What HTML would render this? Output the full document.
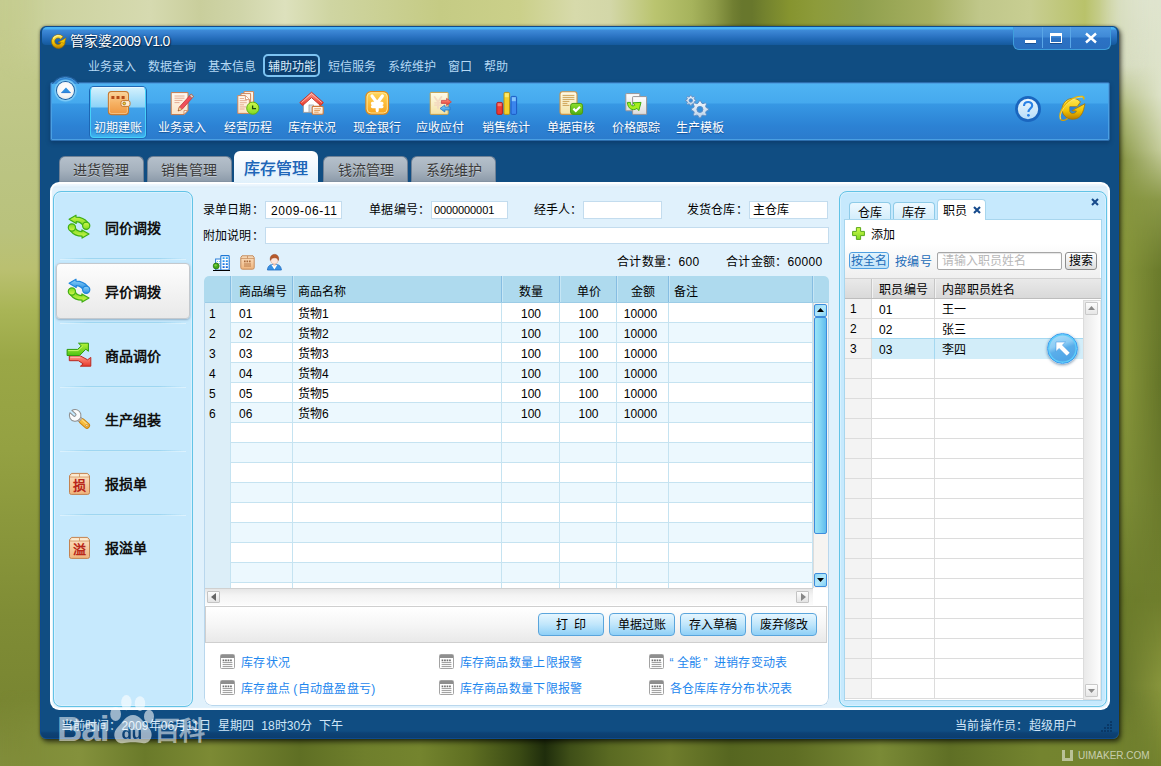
<!DOCTYPE html>
<html lang="zh-CN">
<head>
<meta charset="utf-8">
<title>管家婆2009 V1.0</title>
<style>
*{box-sizing:border-box;margin:0;padding:0}
html,body{width:1161px;height:766px;overflow:hidden}
body{font-family:"Liberation Sans",sans-serif;font-size:12px;color:#000;position:relative;background:#7d8c3a}
.abs{position:absolute}
i{display:block;font-style:normal}
svg{display:block;overflow:visible}
#bg{position:absolute;left:0;top:0;width:1161px;height:766px;overflow:hidden;background:#8a9845}
#bg div{position:absolute}
#win{position:absolute;left:40px;top:26px;width:1079px;height:713px;background:linear-gradient(#104d82 0,#104d82 704px,#0d4275 706px,#0c3d6e 100%);border:1px solid #0e4a8c;border-radius:6px;box-shadow:2px 3px 5px rgba(0,0,0,.6),0 0 3px rgba(0,0,0,.4)}
#titlebar{position:absolute;left:1px;top:0;width:1075px;height:18px;border-radius:5px 5px 4px 4px;background:linear-gradient(#4ab6f6 0,#49b2f4 2px,#3f8bd8 3px,#3079c8 8px,#2068b4 13px,#14599c 18px)}
#title{position:absolute;left:29px;top:5px;font-size:14px;line-height:18px;color:#fff;white-space:nowrap;text-shadow:0 0 2px #0a2c50,1px 1px 1px #0a2c50}
.menu{position:absolute;top:32px;height:16px;line-height:16px;color:#b4d8f4;font-size:12px;white-space:nowrap;z-index:2}
#toolbar{position:absolute;left:9px;top:55px;width:1060px;height:59px;border:1px solid #2c6dad;border-radius:2px;box-shadow:inset 0 0 0 1px #4a9fe2,0 2px 4px rgba(5,30,70,.35);background:linear-gradient(#4fb4f3 0,#45a9ee 20px,#3798e4 21px,#2c82d4 43px,#2b7bcc 100%)}
.tb{position:absolute;top:4px;width:56px;height:51px;text-align:center;color:#fff;font-size:12px;white-space:nowrap}
.tb span{position:absolute;left:-10px;right:-10px;top:34px;line-height:14px;text-shadow:0 1px 1px rgba(10,50,110,.6)}
.tb.sel{border:1px solid #46d2f8;border-top-color:#e8f8ff;border-radius:4px;background:linear-gradient(#d2f0fd 0,#8cd3f8 19px,#40a2ea 20px,#3694e1 42px,#3fb4f0 100%);box-shadow:0 0 0 1px #1d66b4}
.tb .ic{position:absolute;left:50%;top:4px;width:24px;height:24px;margin-left:-12px}
.tb.sel .ic{top:3px;margin-left:-12px}
.tb.sel span{top:33px;left:-11px;right:-11px}
.tab{position:absolute;top:129px;width:85px;height:27px;border-radius:6px 6px 0 0;background:linear-gradient(#b5c0cb 0,#a6b2be 50%,#8e9cab 92%,#6a7a8c 100%);border:1px solid #6f8196;border-bottom:none;color:#3a3a3a;font-size:14px;text-align:center;line-height:27px;text-shadow:0 1px 0 rgba(255,255,255,.35)}
.tab.act{top:124px;height:32px;width:84px;background:linear-gradient(#fff 0,#f4faff 40%,#e0f0fb 100%);border:none;color:#1f66b8;font-size:16px;line-height:36px;text-shadow:.35px 0 0 #1f66b8,0 1px 1px rgba(120,170,220,.5);z-index:3}
#content{position:absolute;left:9px;top:155px;width:1060px;height:528px;box-shadow:inset 0 0 1px 2px #fff;background:linear-gradient(#f2f9fe 0,#e8f4fd 4px,#dcecf8 5px,#e0f1fc 6px);background-color:#e0f1fc;border-radius:9px}
#side{position:absolute;left:3px;top:9px;width:140px;height:516px;background:#c6e9fd;border:1px solid #62c3e6;border-radius:8px;box-shadow:inset 0 0 0 1px #d8f1fe}
.si{position:absolute;left:2px;width:134px;height:56px}
.si b{position:absolute;left:49px;top:19px;font-size:14px;line-height:18px;font-weight:bold;color:#111;white-space:nowrap}
.si.sel{border:1px solid #c4c9ce;border-radius:4px;background:linear-gradient(#fdfdfd,#f3f3f3 50%,#e9e9e9);box-shadow:0 1px 2px rgba(90,120,150,.5)}
.si.sel b{left:48px;top:19px}
.sic{position:absolute;left:10px;top:14px;width:26px;height:26px}
.si.sel .sic{left:9px;top:14px}
.sep{position:absolute;left:6px;width:126px;height:2px;background:linear-gradient(90deg,rgba(150,210,240,0),#9ed6f1 22%,#9ed6f1 78%,rgba(150,210,240,0));border-bottom:1px solid rgba(235,248,255,.6)}
#status{position:absolute;left:0;top:687px;width:1077px;height:24px;color:#d0e6f8;font-size:12px}
/* main */
#main{position:absolute;left:154px;top:9px;width:626px;height:520px}
.lbl{position:absolute;font-size:12px;line-height:14px;white-space:nowrap;color:#000;letter-spacing:.3px}
.inp{position:absolute;height:18px;background:#fff;border:1px solid #c3dcee;font-size:12px;line-height:16px;padding-left:5px;white-space:nowrap}
#grid{position:absolute;left:0;top:85px;width:625px;height:430px;background:#fff;border-radius:5px 5px 8px 8px;overflow:hidden}
#ghead{position:absolute;left:0;top:0;width:625px;height:27px;background:#aedaee;border-bottom:1px solid #9ccce6}
.gh{position:absolute;top:0;height:26px;line-height:32px;font-size:12px;border-left:1px solid #86bde2;box-shadow:inset 1px 0 0 #c6e6f5;white-space:nowrap}
.gr{position:absolute;left:0;width:610px;height:20px;border-bottom:1px solid #c5e3f1;background:#fff}
.gr.alt{background:#ecf8fe}
.gc{position:absolute;top:0;height:20px;line-height:22px;font-size:12px;border-left:1px solid #c5e3f1;white-space:nowrap}
.gn{position:absolute;left:0;top:0;width:27px;height:20px;background:#dceef8;line-height:22px;padding-left:5px}
/* right */
#right{position:absolute;left:789px;top:9px;width:268px;height:516px;background:#c6e9fd;border:1px solid #62c3e6;border-radius:8px;box-shadow:inset 0 0 0 1px #d8f1fe}
.rtab{position:absolute;top:10px;height:18px;border:1px solid #8ecbe8;border-bottom:none;border-radius:4px 4px 0 0;background:linear-gradient(#eef9ff,#d3edfb);font-size:12px;line-height:20px;text-align:center}
#rin{overflow:hidden;position:absolute;left:4px;top:27px;width:258px;height:482px;background:#fff;border:1px solid #a8d6ee}
.rr{position:absolute;left:0;width:239px;height:20px;border-bottom:1px solid #dcdcdc;background:#fff}
.rc{position:absolute;top:0;height:20px;line-height:22px;font-size:12px;border-left:1px solid #dcdcdc;white-space:nowrap}
.btn{position:absolute;top:6px;width:66px;height:23px;border:1px solid #5aa5dc;border-radius:4px;background:linear-gradient(#e6f6ff 0,#c0e6fb 50%,#8fd0f7 100%);font-size:12px;line-height:23px;text-align:center;white-space:pre}
.lnk{position:absolute;font-size:12px;line-height:14px;letter-spacing:.3px;color:#1c86ee;white-space:nowrap}
.li{position:absolute;width:16px;height:15px}

</style>
</head>
<body>
<svg width="0" height="0" style="position:absolute"><defs>
<linearGradient id="gOr" x1="0" y1="0" x2="0" y2="1"><stop offset="0" stop-color="#fbd49a"/><stop offset=".5" stop-color="#f6b264"/><stop offset="1" stop-color="#ee963f"/></linearGradient>
<linearGradient id="gCr" x1="0" y1="0" x2="0" y2="1"><stop offset="0" stop-color="#fffaf2"/><stop offset="1" stop-color="#fbe3c6"/></linearGradient>
<linearGradient id="gCy" x1="0" y1="0" x2="0" y2="1"><stop offset="0" stop-color="#fffbe9"/><stop offset="1" stop-color="#f4e3a6"/></linearGradient>
<linearGradient id="gYe" x1="0" y1="0" x2="0" y2="1"><stop offset="0" stop-color="#ffd75a"/><stop offset="1" stop-color="#f8a21a"/></linearGradient>
<linearGradient id="gGn" x1="0" y1="0" x2="0" y2="1"><stop offset="0" stop-color="#d2f84c"/><stop offset="1" stop-color="#80da22"/></linearGradient>
<linearGradient id="gGn2" x1="0" y1="0" x2="0" y2="1"><stop offset="0" stop-color="#8ee02a"/><stop offset="1" stop-color="#4fae12"/></linearGradient>
<linearGradient id="gGn3" x1="0" y1="0" x2="0" y2="1"><stop offset="0" stop-color="#b4f23a"/><stop offset="1" stop-color="#4fc414"/></linearGradient>
<linearGradient id="gRd" x1="0" y1="0" x2="0" y2="1"><stop offset="0" stop-color="#ff9a8a"/><stop offset="1" stop-color="#e8382a"/></linearGradient>
<linearGradient id="gBl" x1="0" y1="0" x2="0" y2="1"><stop offset="0" stop-color="#8fd4fa"/><stop offset="1" stop-color="#2a8ee0"/></linearGradient>
<linearGradient id="gGy" x1="0" y1="0" x2="0" y2="1"><stop offset="0" stop-color="#ffffff"/><stop offset="1" stop-color="#dcdcdc"/></linearGradient>
<linearGradient id="gBox" x1="0" y1="0" x2="0" y2="1"><stop offset="0" stop-color="#fbe2c4"/><stop offset="1" stop-color="#efb47c"/></linearGradient>
<linearGradient id="gGold" x1="0" y1="0" x2="0" y2="1"><stop offset="0" stop-color="#ffe95a"/><stop offset=".6" stop-color="#f2c200"/><stop offset="1" stop-color="#b87c00"/></linearGradient>
<linearGradient id="gHelp" x1="0" y1="0" x2="0" y2="1"><stop offset="0" stop-color="#eef8fe"/><stop offset="1" stop-color="#b4dcf8"/></linearGradient>
<linearGradient id="gGear" x1="0" y1="0" x2="0" y2="1"><stop offset="0" stop-color="#f2f7fc"/><stop offset="1" stop-color="#bcd2e8"/></linearGradient>
</defs></svg>
<div id="bg"><div style="left:0;top:0;width:1161px;height:766px;background:linear-gradient(180deg,#c6cd90 0.00%,#c4cb8c 6.53%,#bcc584 19.58%,#b9c27c 30.03%,#bac070 35.25%,#a9b556 40.47%,#9aa746 47.00%,#94a142 58.75%,#8b983c 67.89%,#7f8c35 80.94%,#798632 91.38%,#828e3b 100.00%)"></div><div style="left:1090px;top:0;width:71px;height:766px;background:linear-gradient(180deg,#dfe4ce 0.00%,#d6dcbf 8.49%,#a9b570 14.36%,#84933f 20.89%,#8a993c 32.64%,#8e9c3e 50.00%,#7f8f38 65.27%,#6c7c2b 78.33%,#63732a 91.38%,#6a7a2b 100.00%)"></div><div style="left:1090px;top:0;width:71px;height:766px;background:linear-gradient(180deg,#dfe4ce 0.00%,#dde2c8 12.40%,#c5cc9c 19.58%,#8a9848 26.11%,#6a7a2c 35.25%,#647428 50.00%,#6b7a2c 65.27%,#6f7e2d 78.33%,#88953c 89.43%,#74832f 100.00%);-webkit-mask-image:linear-gradient(90deg,transparent 40%,#000 100%);mask-image:linear-gradient(90deg,transparent 40%,#000 100%)"></div><div style="left:0;top:0;width:1161px;height:80px;-webkit-mask-image:linear-gradient(180deg,#000 0,#000 28px,transparent 80px);mask-image:linear-gradient(180deg,#000 0,#000 28px,transparent 80px)"><div style="left:0;top:0;width:1161px;height:80px;background:linear-gradient(90deg,#c3cb8f 0.00%,#cdd3a0 5.17%,#d6dab0 12.92%,#c9ce9c 17.23%,#d0d5a9 20.67%,#dde1bd 24.55%,#cfd5a2 28.42%,#c5cb84 37.90%,#cbd08a 44.79%,#d7daab 49.53%,#d3d7a8 52.54%,#bac46f 56.42%,#a6b35c 59.60%,#8e9b48 61.58%,#717f32 63.14%,#68772d 63.91%,#68772c 64.77%,#74832e 65.98%,#86942f 68.04%,#8d9b3a 70.20%,#8f9f4c 74.07%,#a6b061 80.10%,#c0c78a 84.41%,#c8ce92 88.72%,#b9c26a 93.45%,#d5dbb8 96.47%,#dfe5d2 100.00%);-webkit-mask-image:linear-gradient(90deg,transparent 0,#000 45px,#000 1100px,transparent 1150px);mask-image:linear-gradient(90deg,transparent 0,#000 45px,#000 1100px,transparent 1150px)"></div></div><div style="left:0;top:690px;width:1161px;height:76px;-webkit-mask-image:linear-gradient(180deg,transparent 0,#000 48px);mask-image:linear-gradient(180deg,transparent 0,#000 48px)"><div style="left:0;top:0;width:1161px;height:76px;background:linear-gradient(90deg,#7c8a36 0.00%,#84913c 6.89%,#6a7a2a 12.49%,#7c8a34 18.09%,#5f6f24 25.84%,#6f7f2c 31.44%,#74842e 36.18%,#5f6f22 40.48%,#3a4a14 44.79%,#1f2d0c 46.94%,#3f4f18 49.10%,#5a6a22 52.54%,#6f7d2c 57.71%,#566620 62.88%,#5f6e24 68.48%,#7a8a36 75.80%,#5f6f25 81.83%,#74842f 89.58%,#73822f 100.00%);-webkit-mask-image:linear-gradient(90deg,transparent 0,#000 50px,#000 1110px,transparent 1161px);mask-image:linear-gradient(90deg,transparent 0,#000 50px,#000 1110px,transparent 1161px)"></div></div></div>
<div id="win">
<div id="titlebar"></div>
<svg class="abs" style="left:8px;top:5px" width="20" height="20" viewBox="0 0 20 20">
<path d="M14.2 4.6 A6.9 6.9 0 1 0 16.2 10.6 L15 8 L9 10.4 L12 10.8 A3.3 3.3 0 1 1 11.6 7.2 Z" fill="url(#gGold)" stroke="#9a6a00" stroke-width=".7" stroke-linejoin="round"/>
<path d="M9.4 10.2 L17.2 5.8 L15.2 11.4 L12.4 10.4 Z" fill="#f4c800" stroke="#9a6a00" stroke-width=".5" stroke-linejoin="round"/>
<path d="M4.2 6.6 A6 6 0 0 1 12.6 4.4" fill="none" stroke="#fff7a8" stroke-width="1.2" opacity=".75"/></svg>
<div id="title">管家婆<span style="letter-spacing:-.7px">2009 V1.0</span></div>
<div id="menubar"><div class="abs" style="left:222px;top:27px;width:57px;height:23px;border:2px solid #7cc3f2;border-radius:5px;background:#0c3f70"></div><div class="menu" style="left:46.5px">业务录入</div><div class="menu" style="left:106.5px">数据查询</div><div class="menu" style="left:166.5px">基本信息</div><div class="menu" style="left:226.5px;color:#d8ecfb">辅助功能</div><div class="menu" style="left:286.5px">短信服务</div><div class="menu" style="left:347.0px">系统维护</div><div class="menu" style="left:407.0px">窗口</div><div class="menu" style="left:443.0px">帮助</div></div>
<div class="abs" style="left:972px;top:0;width:98px;height:23px;border:1px solid #3f9fdc;border-top:none;border-radius:0 0 6px 6px;background:linear-gradient(#4f9ae2 0,#3f89d6 10px,#2b72c4 11px,#2a6fc0 100%)">
<div class="abs" style="left:28px;top:0;width:1px;height:21px;background:#5aa6e6"></div><div class="abs" style="left:56px;top:0;width:1px;height:21px;background:#5aa6e6"></div>
<div class="abs" style="left:11px;top:13px;width:11px;height:3px;background:#fff;box-shadow:0 1px 0 #1a4f90"></div>
<div class="abs" style="left:36px;top:6px;width:12px;height:10px;border:1px solid #fff;border-top:3px solid #fff;box-shadow:0 1px 0 #1a4f90"></div>
<svg class="abs" style="left:71px;top:6px" width="12" height="10" viewBox="0 0 12 10"><path d="M1 0.5 L11 9.5 M11 0.5 L1 9.5" stroke="#fff" stroke-width="2.4"/></svg>
</div>
<div id="toolbar"><div class="tb sel" style="left:39.3px"><i class="ic"><svg width="24" height="24" viewBox="0 0 24 24"><rect x="2.4" y="0.6" width="20" height="23" rx="3" fill="url(#gOr)" stroke="#c6782e" stroke-width="1.1"/>
<rect x="3.4" y="1.6" width="18" height="21" rx="2.2" fill="none" stroke="#fde2b8" stroke-width=".7" opacity=".8"/>
<rect x="5.4" y="5" width="3" height="3" fill="#b54a18"/><rect x="10.5" y="5" width="3" height="3" fill="#b54a18"/><rect x="15.6" y="5" width="3" height="3" fill="#b54a18"/>
<rect x="15" y="9.6" width="9" height="5.8" rx="1.8" fill="#fdf0d8" stroke="#c6782e" stroke-width="1"/>
<circle cx="18.2" cy="12.5" r="1.4" fill="#f4d23a" stroke="#8a5a1a" stroke-width=".7"/></svg></i><span>初期建账</span></div>
<div class="tb" style="left:103.3px"><i class="ic"><svg width="24" height="24" viewBox="0 0 24 24"><path d="M1.2 1.6 H18 V19.5 L14 23.6 H1.2 Z" fill="url(#gCr)" stroke="#c87a4a" stroke-width="1"/>
<path d="M14 23.4 V19.6 H17.8 Z" fill="#fff" stroke="#c87a4a" stroke-width=".8"/>
<path d="M4.5 5 H14.5 M4.5 7.2 H14.5 M4.5 9.4 H12.5 M4.5 11.6 H9.5" stroke="#e2a48a" stroke-width=".9"/>
<path d="M21.2 3 L23.6 5.4 L12 18.4 L8.2 19.9 L9.4 16 Z" fill="#f0505a" stroke="#c23a3a" stroke-width=".8"/>
<path d="M21.2 3 L23.6 5.4 L22 7.2 L19.6 4.8 Z" fill="#c9c9c9" stroke="#a06a4a" stroke-width=".7"/>
<path d="M9.4 16 L12 18.4 L8.2 19.9 Z" fill="#f8e4b0" stroke="#b87a3a" stroke-width=".6"/><path d="M8.2 19.9 L9.3 19.5 L8.6 18.8Z" fill="#7a4a1a"/></svg></i><span>业务录入</span></div>
<div class="tb" style="left:168.8px"><i class="ic"><svg width="24" height="24" viewBox="0 0 24 24"><path d="M8 0.6 H17.6 V17 H8 Z" fill="url(#gCr)" stroke="#cf865a" stroke-width="1"/>
<path d="M5 2.6 H14.6 V19 H5 Z" fill="url(#gCr)" stroke="#cf865a" stroke-width="1"/>
<path d="M1.8 4.6 H9.4 L13.4 8.6 V22.4 H1.8 Z" fill="url(#gCr)" stroke="#cf865a" stroke-width="1"/>
<path d="M9.4 4.8 V8.6 H13.2" fill="#fff" stroke="#cf865a" stroke-width=".8"/>
<path d="M3.8 7.5 H8 M3.8 9.6 H10.8 M3.8 11.7 H10.8 M3.8 13.8 H8 M3.8 15.9 H10 M3.8 18 H8.6" stroke="#e3a88c" stroke-width=".9"/>
<circle cx="16.8" cy="17.2" r="6.1" fill="url(#gGn)" stroke="#5fae16" stroke-width="1"/>
<path d="M16.6 14.4 V17.6 H20" fill="none" stroke="#1e4a0a" stroke-width="1.3"/></svg></i><span>经营历程</span></div>
<div class="tb" style="left:233.4px"><i class="ic"><svg width="24" height="24" viewBox="0 0 24 24"><path d="M3.4 11 L11.6 4 L19.6 11 V21.4 H3.4 Z" fill="#fff" stroke="#9a9a9a" stroke-width=".9"/>
<rect x="9" y="14" width="4.4" height="7.2" fill="#d6dde4" stroke="#9a9a9a" stroke-width=".7"/>
<path d="M11.5 1.2 L23.4 11.6 L20.6 14.6 L11.5 6.6 L2.6 14.6 L-0.2 11.6 Z" fill="url(#gRd)" stroke="#c9342a" stroke-width="1"/>
<path d="M11.5 2.6 L21.8 11.6" stroke="#ffc8c0" stroke-width="1" opacity=".8"/><path d="M11.5 2.6 L1.4 11.6" stroke="#ffc8c0" stroke-width="1" opacity=".8"/>
<rect x="12.2" y="15.4" width="11" height="7.8" rx="1" fill="url(#gCr)" stroke="#cf7a3a" stroke-width="1.1"/>
<path d="M14.2 17.8 H21 M14.2 19.5 H20 M14.2 21.2 H18.6" stroke="#e09a5a" stroke-width=".9"/></svg></i><span>库存状况</span></div>
<div class="tb" style="left:297.6px"><i class="ic"><svg width="24" height="24" viewBox="0 0 24 24"><rect x="0.9" y="0.6" width="22.6" height="22.6" rx="5" fill="url(#gYe)" stroke="#dd8a1c" stroke-width="1.2"/>
<rect x="2.1" y="1.8" width="20.2" height="20.2" rx="4" fill="none" stroke="#ffe9a0" stroke-width=".9"/>
<path d="M7 5 L12.2 12 L17.4 5 M12.2 12 V19.6 M7.4 12.4 H17 M7.4 15.6 H17" fill="none" stroke="#fff" stroke-width="3.1" stroke-linecap="round" stroke-linejoin="round"/></svg></i><span>现金银行</span></div>
<div class="tb" style="left:361.4px"><i class="ic"><svg width="24" height="24" viewBox="0 0 24 24"><rect x="2.2" y="1.4" width="18" height="22" rx=".8" fill="url(#gCy)" stroke="#c9a04a" stroke-width="1"/>
<path d="M6.6 6 L10 11 L13.4 6 M10 11 V17 M7 11.8 H13 M7 14.2 H13" fill="none" stroke="#f3d8c0" stroke-width="1.8" stroke-linecap="round" opacity=".9"/>
<path d="M13.4 9.4 H18.6 V7.4 L23.4 10.9 L18.6 14.4 V12.4 H13.4 Z" fill="url(#gRd)" stroke="#c8484a" stroke-width=".8"/>
<path d="M22 16 H16.8 V14 L12 17.5 L16.8 21 V19 H22 Z" fill="url(#gBl)" stroke="#2a78c8" stroke-width=".8"/></svg></i><span>应收应付</span></div>
<div class="tb" style="left:427.4px"><i class="ic"><svg width="24" height="24" viewBox="0 0 24 24"><rect x="2.8" y="11.4" width="5.6" height="12" rx="1.2" fill="#ee3a34" stroke="#b01a1a" stroke-width=".9"/><rect x="3.6" y="12.2" width="4" height="3" fill="#ff8a7a" opacity=".8"/>
<rect x="10" y="1.4" width="5.6" height="22" rx="1.2" fill="#f2d02a" stroke="#b8900a" stroke-width=".9"/><rect x="10.8" y="2.2" width="4" height="4" fill="#fff07a" opacity=".8"/>
<rect x="17" y="5.4" width="5.6" height="18" rx="1.2" fill="#3a86ee" stroke="#1a56c0" stroke-width=".9"/><rect x="17.8" y="6.2" width="4" height="4" fill="#8fd0ff" opacity=".85"/></svg></i><span>销售统计</span></div>
<div class="tb" style="left:491.8px"><i class="ic"><svg width="24" height="24" viewBox="0 0 24 24"><rect x="1" y="0.8" width="17" height="22.6" rx="2.4" fill="url(#gCy)" stroke="#c9944a" stroke-width="1.1"/>
<path d="M3.6 4.4 H15.4 M3.6 6.4 H15.4 M3.6 8.4 H15.4 M3.6 10.4 H10.4 M3.6 12.4 H8.4 M3.6 14.4 H10.4" stroke="#c89a4a" stroke-width=".9"/>
<rect x="11.6" y="12.4" width="12" height="11" rx="2.4" fill="url(#gGn2)" stroke="#4a9a14" stroke-width="1"/>
<path d="M14.4 17.6 L16.8 20 L21 15.8" fill="none" stroke="#fff" stroke-width="2.2"/></svg></i><span>单据审核</span></div>
<div class="tb" style="left:556.8px"><i class="ic"><svg width="24" height="24" viewBox="0 0 24 24"><rect x="1.8" y="2.6" width="14" height="17.2" rx=".6" fill="url(#gGy)" stroke="#9a9494" stroke-width="1"/>
<rect x="8.6" y="5.6" width="14" height="17.8" rx=".6" fill="url(#gGy)" stroke="#9a9494" stroke-width="1"/>
<path d="M3.4 11.4 C3.6 17.6 8.6 20.4 13 17.4 L14.8 19.6 L17 11.4 L9 11.8 L10.8 14.2 C8.6 15.8 6.4 14.6 6.4 11.4 Z" fill="#a6ee1e" stroke="#3fae12" stroke-width="1"/></svg></i><span>价格跟踪</span></div>
<div class="tb" style="left:621.4px"><i class="ic"><svg width="24" height="24" viewBox="0 0 24 24"><path d="M7.97 8.99 L7.97 10.01 L6.53 10.63 L6.24 11.34 L6.82 12.80 L6.10 13.52 L4.64 12.94 L3.93 13.23 L3.31 14.67 L2.29 14.67 L1.67 13.23 L0.96 12.94 L-0.50 13.52 L-1.22 12.80 L-0.64 11.34 L-0.93 10.63 L-2.37 10.01 L-2.37 8.99 L-0.93 8.37 L-0.64 7.66 L-1.22 6.20 L-0.50 5.48 L0.96 6.06 L1.67 5.77 L2.29 4.33 L3.31 4.33 L3.93 5.77 L4.64 6.06 L6.10 5.48 L6.82 6.20 L6.24 7.66 L6.53 8.37 Z" fill="url(#gGear)" stroke="#5f8fc6" stroke-width="1" stroke-linejoin="round"/><circle cx="2.80" cy="9.50" r="1.70" fill="#3590dd" stroke="#5f8fc6" stroke-width="1"/><path d="M20.36 17.57 L20.36 19.23 L18.12 20.29 L17.63 21.46 L18.47 23.79 L17.29 24.97 L14.96 24.13 L13.79 24.62 L12.73 26.86 L11.07 26.86 L10.01 24.62 L8.84 24.13 L6.51 24.97 L5.33 23.79 L6.17 21.46 L5.68 20.29 L3.44 19.23 L3.44 17.57 L5.68 16.51 L6.17 15.34 L5.33 13.01 L6.51 11.83 L8.84 12.67 L10.01 12.18 L11.07 9.94 L12.73 9.94 L13.79 12.18 L14.96 12.67 L17.29 11.83 L18.47 13.01 L17.63 15.34 L18.12 16.51 Z" fill="url(#gGear)" stroke="#5f8fc6" stroke-width="1" stroke-linejoin="round"/><circle cx="11.90" cy="18.40" r="3.00" fill="#3590dd" stroke="#5f8fc6" stroke-width="1"/></svg></i><span>生产模板</span></div>
<div class="abs" style="left:0px;top:-6px;width:29px;height:29px;border-radius:50%;background:linear-gradient(#2a7ccc,#3a96e2 30%);border:1px solid #4a9add;box-shadow:0 0 0 1px #2360a0;clip-path:inset(-2px -2px 22px -2px)"></div>
<div class="abs" style="left:6px;top:-1px;width:17px;height:17px;border-radius:50%;background:radial-gradient(circle at 50% 35%,#fff 0,#f6f6f6 55%,#dedede 100%);box-shadow:0 0 0 1px #1f5c9e,0 0 1px 2.5px #7fcdf8"></div>
<svg class="abs" style="left:9.5px;top:4px" width="10" height="6" viewBox="0 0 10 6"><path d="M0.3 5.6 L5 0.4 L9.7 5.6 Z" fill="#2e8ee0"/><path d="M0.3 5.6 H9.7" stroke="#1a6fd0" stroke-width=".9"/></svg><svg class="abs" style="left:963px;top:12px" width="28" height="28" viewBox="0 0 28 28"><circle cx="14" cy="14" r="11.6" fill="url(#gHelp)" stroke="#1a66bf" stroke-width="2.8"/>
<path d="M10 11 C10 5.6 18.4 5.8 18.2 10.6 C18.1 13.4 14.4 13.8 14.4 17" fill="none" stroke="#2a82e6" stroke-width="2.1"/><circle cx="14.4" cy="20.3" r="1.4" fill="#2a82e6"/></svg><svg class="abs" style="left:1006px;top:10px" width="30" height="30" viewBox="0 0 30 30">
<g transform="translate(16 16.4) scale(1.13) translate(-16 -15)"><path d="M22.6 8.4 C18 2.6 7.4 5 6.4 14 C5.6 23.6 17.6 26.6 22.8 20.6 C25.4 17.4 25.8 13 26.6 10 L14.8 16.2 L19 16.4 C18.4 19 14.2 19.4 13.2 17 L13.2 12.6 L19.6 12.6 Z" fill="url(#gGold)" stroke="#a87400" stroke-width=".7"/>
<path d="M13.2 12.6 H19.4 L14.8 16.2 H13.2 Z" fill="#2f7fd4"/></g>
<path d="M3.6 26.4 C0.6 19 12 2.4 25.6 3.6 C27 4 27 5.4 26.6 6.6" fill="none" stroke="#e8b400" stroke-width="1.6"/><path d="M3.6 26.4 C1.4 19.6 12 3.6 25.6 4.2" fill="none" stroke="#fff3b0" stroke-width=".6" opacity=".9"/>
<path d="M3.6 26.4 C5 28.2 8.6 27.4 10.6 25.6" fill="none" stroke="#d8a000" stroke-width="1.4"/></svg></div>
<div id="tabs"><div class="tab" style="left:17.5px">进货管理</div><div class="tab" style="left:105.5px">销售管理</div><div class="tab act" style="left:193.0px">库存管理</div><div class="tab" style="left:282.0px">钱流管理</div><div class="tab" style="left:370.0px">系统维护</div></div>
<div id="content">
<div id="side"><div class="sep" style="top:66px"></div><div class="sep" style="top:130px"></div><div class="sep" style="top:194px"></div><div class="sep" style="top:258px"></div><div class="sep" style="top:322px"></div><div class="si" style="top:8px"><i class="sic"><svg width="26" height="26" viewBox="0 0 26 26"><path d="M3.1 5.3 L10 1.2 L10 3.1 C15 3.1 19 5 21.6 8.4 L16.8 11.2 C15.4 9 13.4 7.7 10.2 7.6 L10.2 9.4 Z" fill="url(#gGn)" stroke="#3fae14" stroke-width="1.2" stroke-linejoin="round"/><circle cx="20.2" cy="11.8" r="3.6" fill="url(#gGn)" stroke="#3fae14" stroke-width="1.2"/><g transform="rotate(180 13.05 12.65)"><path d="M3.1 5.3 L10 1.2 L10 3.1 C15 3.1 19 5 21.6 8.4 L16.8 11.2 C15.4 9 13.4 7.7 10.2 7.6 L10.2 9.4 Z" fill="url(#gGn)" stroke="#3fae14" stroke-width="1.2" stroke-linejoin="round"/><circle cx="20.2" cy="11.8" r="3.6" fill="url(#gGn)" stroke="#3fae14" stroke-width="1.2"/></g></svg></i><b>同价调拨</b></div>
<div class="si sel" style="top:71px"><i class="sic"><svg width="26" height="26" viewBox="0 0 26 26"><path d="M3.1 5.3 L10 1.2 L10 3.1 C15 3.1 19 5 21.6 8.4 L16.8 11.2 C15.4 9 13.4 7.7 10.2 7.6 L10.2 9.4 Z" fill="url(#gBl)" stroke="#1f86dc" stroke-width="1.2" stroke-linejoin="round"/><circle cx="20.2" cy="11.8" r="3.6" fill="url(#gBl)" stroke="#1f86dc" stroke-width="1.2"/><g transform="rotate(180 13.05 12.65)"><path d="M3.1 5.3 L10 1.2 L10 3.1 C15 3.1 19 5 21.6 8.4 L16.8 11.2 C15.4 9 13.4 7.7 10.2 7.6 L10.2 9.4 Z" fill="url(#gGn)" stroke="#3fae14" stroke-width="1.2" stroke-linejoin="round"/><circle cx="20.2" cy="11.8" r="3.6" fill="url(#gGn)" stroke="#3fae14" stroke-width="1.2"/></g></svg></i><b>异价调拨</b></div>
<div class="si" style="top:136px"><i class="sic"><svg width="26" height="26" viewBox="0 0 26 26"><path d="M3.3 14 L14.5 14 L21.6 17.8 L24.8 15.4 L24.8 24.2 L14.4 24.2 L17.2 21.9 L12.4 18.7 L3.3 18.7 Z" fill="url(#gRd)" stroke="#b82a22" stroke-width="1" stroke-linejoin="round"/>
<path d="M1.1 7.4 L11.6 7.4 L15.3 3.9 L12.5 1.2 L22.4 1.2 L22.4 9.3 L19.8 7.2 L13.6 13.5 L1.1 13.5 Z" fill="url(#gGn3)" stroke="#2f9a0e" stroke-width="1" stroke-linejoin="round"/>
<path d="M2.2 8.6 H12 L16.6 4.2" fill="none" stroke="#d2ff7a" stroke-width="1" opacity=".85"/><path d="M4.4 15.2 H14" fill="none" stroke="#ffd0c4" stroke-width="1" opacity=".85"/></svg></i><b>商品调价</b></div>
<div class="si" style="top:200px"><i class="sic"><svg width="26" height="26" viewBox="0 0 26 26"><g transform="translate(9.1 9.3) rotate(41)"><rect x="6.6" y="-2.6" width="11.6" height="5.2" rx="2.4" fill="#f7bc3e" stroke="#c98214" stroke-width="1"/><path d="M7 -1.2 H15" stroke="#ffe08a" stroke-width="1.2" opacity=".8"/>
<circle cx="15.6" cy="0" r="1" fill="#fff" stroke="#b87410" stroke-width=".6"/>
<rect x="4.8" y="-2.4" width="2.4" height="4.8" fill="#d4d4d4" stroke="#8a8a8a" stroke-width=".7"/>
<path d="M-5.63 -1.5 A5.85 5.85 0 1 1 -5.63 1.5 L-0.8 1.5 A1.5 1.5 0 0 0 -0.8 -1.5 Z" fill="#fbfbfb" stroke="#8c8c8c" stroke-width="1" stroke-linejoin="round"/></g></svg></i><b>生产组装</b></div>
<div class="si" style="top:264px"><i class="sic"><svg width="26" height="26" viewBox="0 0 26 26"><g transform="translate(0.5 2.4)"><path d="M3 3.4 L5 1 H21 L23 3.4 V20.2 Q23 22 21.2 22 H4.8 Q3 22 3 20.2 Z" fill="url(#gBox)" stroke="#c48250" stroke-width="1"/>
<path d="M3.4 4.6 H22.6 M13 1.2 V4.6" stroke="#d29a68" stroke-width=".9"/><path d="M4.6 3.8 L5.6 2 H12.4 V3.8Z M13.6 3.8 V2 H20.4 L21.4 3.8Z" fill="#fdf0da" opacity=".8"/>
<text x="13" y="18" font-family="Liberation Sans, sans-serif" font-size="13" font-weight="bold" fill="#b8261a" text-anchor="middle">损</text></g></svg></i><b>报损单</b></div>
<div class="si" style="top:328px"><i class="sic"><svg width="26" height="26" viewBox="0 0 26 26"><g transform="translate(0.5 2.4)"><path d="M3 3.4 L5 1 H21 L23 3.4 V20.2 Q23 22 21.2 22 H4.8 Q3 22 3 20.2 Z" fill="url(#gBox)" stroke="#c48250" stroke-width="1"/>
<path d="M3.4 4.6 H22.6 M13 1.2 V4.6" stroke="#d29a68" stroke-width=".9"/><path d="M4.6 3.8 L5.6 2 H12.4 V3.8Z M13.6 3.8 V2 H20.4 L21.4 3.8Z" fill="#fdf0da" opacity=".8"/>
<text x="13" y="18" font-family="Liberation Sans, sans-serif" font-size="13" font-weight="bold" fill="#b8261a" text-anchor="middle">溢</text></g></svg></i><b>报溢单</b></div>
</div>
<div id="main"><div class="lbl" style="left:-1.5px;top:12.0px">录单日期：</div>
<div class="inp" style="left:61.0px;top:10.0px;width:77.0px;height:18.0px;font-size:12px;line-height:18px;padding-left:5px;letter-spacing:0.60px">2009-06-11</div>
<div class="lbl" style="left:165.0px;top:12.0px">单据编号：</div>
<div class="inp" style="left:227.0px;top:10.0px;width:77.0px;height:18.0px;font-size:11px;line-height:16px;padding-left:2px;letter-spacing:-0.10px">0000000001</div>
<div class="lbl" style="left:329.5px;top:12.0px">经手人：</div>
<div class="inp" style="left:379.0px;top:10.0px;width:79.0px;height:18.0px;font-size:12px;line-height:16px;padding-left:5px;letter-spacing:0.00px"></div>
<div class="lbl" style="left:482.5px;top:12.0px">发货仓库：</div>
<div class="inp" style="left:545.0px;top:10.0px;width:79.0px;height:18.0px;font-size:12px;line-height:16px;padding-left:3px;letter-spacing:0.00px">主仓库</div>
<div class="lbl" style="left:-1.5px;top:38.0px">附加说明：</div>
<div class="inp" style="left:61.0px;top:36.0px;width:564.0px;height:17.0px;font-size:12px;line-height:15px;padding-left:5px;letter-spacing:0.00px"></div>
<i class="abs" style="left:9px;top:64px;width:17px;height:15px"><svg width="17" height="16" viewBox="0 0 17 16"><rect x="2.6" y="4" width="6" height="11" fill="#fff" stroke="#2a7fd8" stroke-width="1"/><path d="M4 6.5 H7 M4 8.5 H7" stroke="#6ab8f4" stroke-width="1" stroke-dasharray="1 1"/>
<rect x="7.8" y="0.6" width="8.4" height="14.4" rx=".8" fill="#fff" stroke="#1f78d4" stroke-width="1.1"/>
<path d="M9.6 3.2 H11.6 M12.8 3.2 H14.8" stroke="#2ea2f4" stroke-width="1.8"/><path d="M9.6 6.2 H11.6 M12.8 6.2 H14.8" stroke="#2a92ee" stroke-width="1.8"/><path d="M9.6 9.2 H11.6 M12.8 9.2 H14.8" stroke="#1a7ae4" stroke-width="1.8"/><path d="M9.6 12.2 H11.6 M12.8 12.2 H14.8" stroke="#1468d8" stroke-width="1.8"/>
<circle cx="3.2" cy="11" r="3" fill="#3fa81a" stroke="#1f6a0a" stroke-width=".7"/><circle cx="2.6" cy="10.2" r="1.2" fill="#8fe04a" opacity=".7"/>
<path d="M0 15.5 H17" stroke="#000" stroke-width="1"/></svg></i>
<i class="abs" style="left:36px;top:64px;width:15px;height:15px"><svg width="15" height="15" viewBox="0 0 15 15"><path d="M.8 2.6 L2 .8 H13 L14.2 2.6 V12.6 Q14.2 14.2 12.6 14.2 H2.4 Q.8 14.2 .8 12.6 Z" fill="url(#gBox)" stroke="#c48a5a" stroke-width="1"/>
<path d="M1 3.4 H14 M7.5 1 V3.4" stroke="#c48a5a" stroke-width=".8"/><path d="M4 6.4 H11" stroke="#a8683a" stroke-width="1.6" stroke-dasharray="1.6 .9"/><path d="M4 9 H11 M4 11 H11" stroke="#b87a4a" stroke-width="1"/></svg></i>
<i class="abs" style="left:63px;top:63px;width:15px;height:16px"><svg width="15" height="17" viewBox="0 0 15 17"><path d="M.4 16 C.8 11.6 3.4 10.2 7.4 10.2 C11.4 10.2 14 11.6 14.4 16 Z" fill="#3a92e4" stroke="#1f6cc0" stroke-width=".8"/>
<path d="M4.2 10.4 L7.4 15.4 L10.6 10.4 L7.4 11.2Z" fill="#fff"/>
<path d="M6.2 8 H8.6 V11.4 L7.4 12.6 L6.2 11.4Z" fill="#f8d0bc"/>
<ellipse cx="7.4" cy="5.6" rx="3.7" ry="4.4" fill="#fde6dc" stroke="#d89a80" stroke-width=".5"/>
<path d="M3.4 6.4 C2.6 2.4 5 .4 7.6 .4 C10.6 .4 12.2 2.8 11.4 6.4 C10.8 4.4 9.4 3.6 7.4 3.8 C5.6 3.8 4.4 4.4 3.4 6.4Z" fill="#b85a2a" stroke="#8a3a1a" stroke-width=".5"/></svg></i>
<div class="lbl" style="left:413.0px;top:64.0px">合计数量：600</div>
<div class="lbl" style="left:522.0px;top:64.0px">合计金额：60000</div>
<div id="grid"><div id="ghead"><div class="gh" style="left:26.0px;width:62.0px;padding-left:7.5px">商品编号</div><div class="gh" style="left:88.0px;width:209.0px;padding-left:4.5px">商品名称</div><div class="gh" style="left:297.0px;width:58.0px;text-align:center;padding-left:1.0px">数量</div><div class="gh" style="left:355.0px;width:57.0px;text-align:center;padding-left:1.0px">单价</div><div class="gh" style="left:412.0px;width:52.0px;text-align:center;padding-left:-2.0px">金额</div><div class="gh" style="left:464.0px;width:144.0px;padding-left:4.5px">备注</div><div class="gh" style="left:608.0px;width:16.5px;"></div></div>
<div class="gr" style="top:26.5px"><div class="gn">1</div><div class="gc" style="left:26.0px;width:62.0px;padding-left:8px">01</div><div class="gc" style="left:88.0px;width:209.0px;padding-left:5px">货物1</div><div class="gc" style="left:297.0px;width:58.0px;text-align:center;padding-left:1px">100</div><div class="gc" style="left:355.0px;width:57.0px;text-align:center;padding-left:1px">100</div><div class="gc" style="left:412.0px;width:52.0px;text-align:center;padding-right:4px">10000</div><div class="gc" style="left:464.0px;width:145.0px;border-right:1px solid #c5e3f1"></div></div>
<div class="gr alt" style="top:46.5px"><div class="gn">2</div><div class="gc" style="left:26.0px;width:62.0px;padding-left:8px">02</div><div class="gc" style="left:88.0px;width:209.0px;padding-left:5px">货物2</div><div class="gc" style="left:297.0px;width:58.0px;text-align:center;padding-left:1px">100</div><div class="gc" style="left:355.0px;width:57.0px;text-align:center;padding-left:1px">100</div><div class="gc" style="left:412.0px;width:52.0px;text-align:center;padding-right:4px">10000</div><div class="gc" style="left:464.0px;width:145.0px;border-right:1px solid #c5e3f1"></div></div>
<div class="gr" style="top:66.5px"><div class="gn">3</div><div class="gc" style="left:26.0px;width:62.0px;padding-left:8px">03</div><div class="gc" style="left:88.0px;width:209.0px;padding-left:5px">货物3</div><div class="gc" style="left:297.0px;width:58.0px;text-align:center;padding-left:1px">100</div><div class="gc" style="left:355.0px;width:57.0px;text-align:center;padding-left:1px">100</div><div class="gc" style="left:412.0px;width:52.0px;text-align:center;padding-right:4px">10000</div><div class="gc" style="left:464.0px;width:145.0px;border-right:1px solid #c5e3f1"></div></div>
<div class="gr alt" style="top:86.5px"><div class="gn">4</div><div class="gc" style="left:26.0px;width:62.0px;padding-left:8px">04</div><div class="gc" style="left:88.0px;width:209.0px;padding-left:5px">货物4</div><div class="gc" style="left:297.0px;width:58.0px;text-align:center;padding-left:1px">100</div><div class="gc" style="left:355.0px;width:57.0px;text-align:center;padding-left:1px">100</div><div class="gc" style="left:412.0px;width:52.0px;text-align:center;padding-right:4px">10000</div><div class="gc" style="left:464.0px;width:145.0px;border-right:1px solid #c5e3f1"></div></div>
<div class="gr" style="top:106.5px"><div class="gn">5</div><div class="gc" style="left:26.0px;width:62.0px;padding-left:8px">05</div><div class="gc" style="left:88.0px;width:209.0px;padding-left:5px">货物5</div><div class="gc" style="left:297.0px;width:58.0px;text-align:center;padding-left:1px">100</div><div class="gc" style="left:355.0px;width:57.0px;text-align:center;padding-left:1px">100</div><div class="gc" style="left:412.0px;width:52.0px;text-align:center;padding-right:4px">10000</div><div class="gc" style="left:464.0px;width:145.0px;border-right:1px solid #c5e3f1"></div></div>
<div class="gr alt" style="top:126.5px"><div class="gn">6</div><div class="gc" style="left:26.0px;width:62.0px;padding-left:8px">06</div><div class="gc" style="left:88.0px;width:209.0px;padding-left:5px">货物6</div><div class="gc" style="left:297.0px;width:58.0px;text-align:center;padding-left:1px">100</div><div class="gc" style="left:355.0px;width:57.0px;text-align:center;padding-left:1px">100</div><div class="gc" style="left:412.0px;width:52.0px;text-align:center;padding-right:4px">10000</div><div class="gc" style="left:464.0px;width:145.0px;border-right:1px solid #c5e3f1"></div></div>
<div class="gr" style="top:146.5px"><div class="gn"></div><div class="gc" style="left:26.0px;width:62.0px;padding-left:8px"></div><div class="gc" style="left:88.0px;width:209.0px;padding-left:5px"></div><div class="gc" style="left:297.0px;width:58.0px;text-align:center;padding-left:1px"></div><div class="gc" style="left:355.0px;width:57.0px;text-align:center;padding-left:1px"></div><div class="gc" style="left:412.0px;width:52.0px;text-align:center;padding-right:4px"></div><div class="gc" style="left:464.0px;width:145.0px;border-right:1px solid #c5e3f1"></div></div>
<div class="gr alt" style="top:166.5px"><div class="gn"></div><div class="gc" style="left:26.0px;width:62.0px;padding-left:8px"></div><div class="gc" style="left:88.0px;width:209.0px;padding-left:5px"></div><div class="gc" style="left:297.0px;width:58.0px;text-align:center;padding-left:1px"></div><div class="gc" style="left:355.0px;width:57.0px;text-align:center;padding-left:1px"></div><div class="gc" style="left:412.0px;width:52.0px;text-align:center;padding-right:4px"></div><div class="gc" style="left:464.0px;width:145.0px;border-right:1px solid #c5e3f1"></div></div>
<div class="gr" style="top:186.5px"><div class="gn"></div><div class="gc" style="left:26.0px;width:62.0px;padding-left:8px"></div><div class="gc" style="left:88.0px;width:209.0px;padding-left:5px"></div><div class="gc" style="left:297.0px;width:58.0px;text-align:center;padding-left:1px"></div><div class="gc" style="left:355.0px;width:57.0px;text-align:center;padding-left:1px"></div><div class="gc" style="left:412.0px;width:52.0px;text-align:center;padding-right:4px"></div><div class="gc" style="left:464.0px;width:145.0px;border-right:1px solid #c5e3f1"></div></div>
<div class="gr alt" style="top:206.5px"><div class="gn"></div><div class="gc" style="left:26.0px;width:62.0px;padding-left:8px"></div><div class="gc" style="left:88.0px;width:209.0px;padding-left:5px"></div><div class="gc" style="left:297.0px;width:58.0px;text-align:center;padding-left:1px"></div><div class="gc" style="left:355.0px;width:57.0px;text-align:center;padding-left:1px"></div><div class="gc" style="left:412.0px;width:52.0px;text-align:center;padding-right:4px"></div><div class="gc" style="left:464.0px;width:145.0px;border-right:1px solid #c5e3f1"></div></div>
<div class="gr" style="top:226.5px"><div class="gn"></div><div class="gc" style="left:26.0px;width:62.0px;padding-left:8px"></div><div class="gc" style="left:88.0px;width:209.0px;padding-left:5px"></div><div class="gc" style="left:297.0px;width:58.0px;text-align:center;padding-left:1px"></div><div class="gc" style="left:355.0px;width:57.0px;text-align:center;padding-left:1px"></div><div class="gc" style="left:412.0px;width:52.0px;text-align:center;padding-right:4px"></div><div class="gc" style="left:464.0px;width:145.0px;border-right:1px solid #c5e3f1"></div></div>
<div class="gr alt" style="top:246.5px"><div class="gn"></div><div class="gc" style="left:26.0px;width:62.0px;padding-left:8px"></div><div class="gc" style="left:88.0px;width:209.0px;padding-left:5px"></div><div class="gc" style="left:297.0px;width:58.0px;text-align:center;padding-left:1px"></div><div class="gc" style="left:355.0px;width:57.0px;text-align:center;padding-left:1px"></div><div class="gc" style="left:412.0px;width:52.0px;text-align:center;padding-right:4px"></div><div class="gc" style="left:464.0px;width:145.0px;border-right:1px solid #c5e3f1"></div></div>
<div class="gr" style="top:266.5px"><div class="gn"></div><div class="gc" style="left:26.0px;width:62.0px;padding-left:8px"></div><div class="gc" style="left:88.0px;width:209.0px;padding-left:5px"></div><div class="gc" style="left:297.0px;width:58.0px;text-align:center;padding-left:1px"></div><div class="gc" style="left:355.0px;width:57.0px;text-align:center;padding-left:1px"></div><div class="gc" style="left:412.0px;width:52.0px;text-align:center;padding-right:4px"></div><div class="gc" style="left:464.0px;width:145.0px;border-right:1px solid #c5e3f1"></div></div>
<div class="gr alt" style="top:286.5px"><div class="gn"></div><div class="gc" style="left:26.0px;width:62.0px;padding-left:8px"></div><div class="gc" style="left:88.0px;width:209.0px;padding-left:5px"></div><div class="gc" style="left:297.0px;width:58.0px;text-align:center;padding-left:1px"></div><div class="gc" style="left:355.0px;width:57.0px;text-align:center;padding-left:1px"></div><div class="gc" style="left:412.0px;width:52.0px;text-align:center;padding-right:4px"></div><div class="gc" style="left:464.0px;width:145.0px;border-right:1px solid #c5e3f1"></div></div>
<div class="gr" style="top:306.5px"><div class="gn"></div><div class="gc" style="left:26.0px;width:62.0px;padding-left:8px"></div><div class="gc" style="left:88.0px;width:209.0px;padding-left:5px"></div><div class="gc" style="left:297.0px;width:58.0px;text-align:center;padding-left:1px"></div><div class="gc" style="left:355.0px;width:57.0px;text-align:center;padding-left:1px"></div><div class="gc" style="left:412.0px;width:52.0px;text-align:center;padding-right:4px"></div><div class="gc" style="left:464.0px;width:145.0px;border-right:1px solid #c5e3f1"></div></div>
<div class="abs" style="left:609px;top:27px;width:16px;height:286px;background:#f6f4f1;border-left:1px solid #dcdcdc;border-right:1px solid #dcdcdc">
<div class="abs" style="left:0;top:1px;width:13px;height:13px;border:1px solid #3d8cdc;border-radius:2px;background:linear-gradient(135deg,#8fd8f6,#b4e8fb 50%,#80d0f4)"></div>
<svg class="abs" style="left:3px;top:5px" width="7" height="4" viewBox="0 0 7 4"><path d="M0 4 L3.5 0 L7 4 Z" fill="#000"/></svg>
<div class="abs" style="left:0;top:14px;width:13px;height:217px;border:1px solid #3d8cdc;border-radius:2px;background:linear-gradient(90deg,#9ae4f7 0,#84d6f4 45%,#60bcee 100%)"></div>
<div class="abs" style="left:0;top:270px;width:13px;height:14px;border:1px solid #3d8cdc;border-radius:2px;background:linear-gradient(135deg,#8fd8f6,#b4e8fb 50%,#80d0f4)"></div>
<svg class="abs" style="left:3px;top:275px" width="7" height="4" viewBox="0 0 7 4"><path d="M0 0 L3.5 4 L7 0 Z" fill="#000"/></svg>
</div>
<div class="abs" style="left:0;top:312px;width:609px;height:17px;background:linear-gradient(#e6e6e6 0,#f4f4f4 40%,#fbfbfb 100%);border-top:1px solid #d0d0d0">
<div class="abs" style="left:3px;top:2px;width:13px;height:12px;border:1px solid #c4c4c4;border-radius:1px;background:linear-gradient(#fdfdfd,#e4e4e4)"></div>
<svg class="abs" style="left:7px;top:4px" width="5" height="8" viewBox="0 0 5 8"><path d="M5 0 L0 4 L5 8 Z" fill="#666"/></svg>
<div class="abs" style="left:592px;top:2px;width:13px;height:12px;border:1px solid #c4c4c4;border-radius:1px;background:linear-gradient(#fdfdfd,#e4e4e4)"></div>
<svg class="abs" style="left:597px;top:4px" width="5" height="8" viewBox="0 0 5 8"><path d="M0 0 L5 4 L0 8 Z" fill="#888"/></svg>
</div>
<div class="abs" style="left:609px;top:312px;width:16px;height:18px;background:#fff"></div>
<div class="abs" style="left:1px;top:330px;width:622px;height:37px;border:1px solid #cfcfcf;background:linear-gradient(#fff 0,#f6f6f6 50%,#e9e9e9 100%)"><div class="btn" style="left:332px">打  印</div><div class="btn" style="left:403px">单据过账</div><div class="btn" style="left:474px">存入草稿</div><div class="btn" style="left:545px">废弃修改</div></div>
<i class="li" style="left:16px;top:378px"><svg width="16" height="15" viewBox="0 0 16 15"><rect x=".5" y=".5" width="14" height="14" rx="1" fill="#fff" stroke="#a3a3a3" stroke-width="1"/><rect x="1" y="1" width="13" height="3" fill="#8e8e8e"/>
<path d="M2.6 6.4 H12.4" stroke="#707070" stroke-width="1.6" stroke-dasharray="1.7 .8"/><path d="M2.6 8.6 H12.4 M2.6 10.6 H12.4 M2.6 12.6 H12.4" stroke="#9a9a9a" stroke-width="1"/></svg></i><div class="lnk" style="left:37.0px;top:379.5px">库存状况</div>
<i class="li" style="left:16px;top:404px"><svg width="16" height="15" viewBox="0 0 16 15"><rect x=".5" y=".5" width="14" height="14" rx="1" fill="#fff" stroke="#a3a3a3" stroke-width="1"/><rect x="1" y="1" width="13" height="3" fill="#8e8e8e"/>
<path d="M2.6 6.4 H12.4" stroke="#707070" stroke-width="1.6" stroke-dasharray="1.7 .8"/><path d="M2.6 8.6 H12.4 M2.6 10.6 H12.4 M2.6 12.6 H12.4" stroke="#9a9a9a" stroke-width="1"/></svg></i><div class="lnk" style="left:37.0px;top:405.5px">库存盘点<span style="padding:0 0 0 3px">(</span>自动盘盈盘亏<span style="padding:0 3px 0 0">)</span></div>
<i class="li" style="left:235px;top:378px"><svg width="16" height="15" viewBox="0 0 16 15"><rect x=".5" y=".5" width="14" height="14" rx="1" fill="#fff" stroke="#a3a3a3" stroke-width="1"/><rect x="1" y="1" width="13" height="3" fill="#8e8e8e"/>
<path d="M2.6 6.4 H12.4" stroke="#707070" stroke-width="1.6" stroke-dasharray="1.7 .8"/><path d="M2.6 8.6 H12.4 M2.6 10.6 H12.4 M2.6 12.6 H12.4" stroke="#9a9a9a" stroke-width="1"/></svg></i><div class="lnk" style="left:255.5px;top:379.5px">库存商品数量上限报警</div>
<i class="li" style="left:235px;top:404px"><svg width="16" height="15" viewBox="0 0 16 15"><rect x=".5" y=".5" width="14" height="14" rx="1" fill="#fff" stroke="#a3a3a3" stroke-width="1"/><rect x="1" y="1" width="13" height="3" fill="#8e8e8e"/>
<path d="M2.6 6.4 H12.4" stroke="#707070" stroke-width="1.6" stroke-dasharray="1.7 .8"/><path d="M2.6 8.6 H12.4 M2.6 10.6 H12.4 M2.6 12.6 H12.4" stroke="#9a9a9a" stroke-width="1"/></svg></i><div class="lnk" style="left:255.5px;top:405.5px">库存商品数量下限报警</div>
<i class="li" style="left:445px;top:378px"><svg width="16" height="15" viewBox="0 0 16 15"><rect x=".5" y=".5" width="14" height="14" rx="1" fill="#fff" stroke="#a3a3a3" stroke-width="1"/><rect x="1" y="1" width="13" height="3" fill="#8e8e8e"/>
<path d="M2.6 6.4 H12.4" stroke="#707070" stroke-width="1.6" stroke-dasharray="1.7 .8"/><path d="M2.6 8.6 H12.4 M2.6 10.6 H12.4 M2.6 12.6 H12.4" stroke="#9a9a9a" stroke-width="1"/></svg></i><div class="lnk" style="left:465.5px;top:379.5px"><span style="padding:0 3px 0 0">“</span>全能<span style="padding:0 6px 0 2px">”</span>进销存变动表</div>
<i class="li" style="left:445px;top:404px"><svg width="16" height="15" viewBox="0 0 16 15"><rect x=".5" y=".5" width="14" height="14" rx="1" fill="#fff" stroke="#a3a3a3" stroke-width="1"/><rect x="1" y="1" width="13" height="3" fill="#8e8e8e"/>
<path d="M2.6 6.4 H12.4" stroke="#707070" stroke-width="1.6" stroke-dasharray="1.7 .8"/><path d="M2.6 8.6 H12.4 M2.6 10.6 H12.4 M2.6 12.6 H12.4" stroke="#9a9a9a" stroke-width="1"/></svg></i><div class="lnk" style="left:465.5px;top:405.5px">各仓库库存分布状况表</div>
<div class="abs" style="left:0;top:26px;width:625px;height:404px;border:1px solid #b9d7ed;border-top:none;border-radius:0 0 8px 8px"></div></div></div>
<div id="right"><div class="rtab" style="left:8.5px;width:42.0px">仓库</div>
<div class="rtab" style="left:52.5px;width:42.0px">库存</div>
<div class="rtab" style="left:97.0px;top:7px;width:49.0px;height:21px;background:#fff;line-height:22px;text-align:left;padding-left:5px;z-index:2;border-color:#a8d6ee">职员<svg class="abs" style="left:35px;top:6px" width="8" height="8" viewBox="0 0 8 8"><path d="M1 1 L7 7 M7 1 L1 7" stroke="#164a8c" stroke-width="2.1"/></svg></div>
<svg class="abs" style="left:251px;top:6px" width="8" height="8" viewBox="0 0 8 8"><path d="M1 1 L7 7 M7 1 L1 7" stroke="#164a8c" stroke-width="2.1"/></svg>
<div id="rin"><div class="abs" style="left:0;top:0;width:255px;height:58px;background:linear-gradient(#fff 0,#fff 40%,#efefef 100%)"></div>
<i class="abs" style="left:7px;top:7px;width:13px;height:13px"><svg width="13" height="13" viewBox="0 0 13 13"><path d="M4.4 .6 H8.6 V4.4 H12.4 V8.6 H8.6 V12.4 H4.4 V8.6 H.6 V4.4 H4.4 Z" fill="url(#gGn)" stroke="#5aa81a" stroke-width="1" stroke-linejoin="round"/></svg></i>
<div class="lbl" style="left:26px;top:8px">添加</div>
<div class="abs" style="left:4.0px;top:31.5px;width:40px;height:17px;border:1px solid #4f9fe0;border-radius:3px;background:linear-gradient(#e2f3fd,#bfe2f9);color:#1a6bb8;font-size:12px;line-height:17px;text-align:center;white-space:nowrap">按全名</div>
<div class="lbl" style="left:50px;top:35px;color:#1a6bb8">按编号</div>
<div class="abs" style="left:92px;top:31.5px;width:125px;height:18px;border:1px solid #a6a6a6;border-radius:2px;background:#fff;color:#b8b8b8;font-size:12px;line-height:16px;padding-left:4px;white-space:nowrap;box-shadow:inset 0 1px 1px #e4e4e4">请输入职员姓名</div>
<div class="abs" style="left:220px;top:31.5px;width:32px;height:18px;border:1px solid #8c8c8c;border-radius:3px;background:linear-gradient(#fff,#dedede);font-size:12px;line-height:16px;text-align:center;white-space:nowrap">搜索</div>
<div class="abs" style="left:0;top:57.5px;width:256px;height:21px;background:linear-gradient(#e9e9e9,#d9d9d9);border-top:1px solid #d2d2d2;border-bottom:1px solid #bdbdbd"></div>
<div class="abs" style="left:26.0px;top:58.5px;width:1px;height:19px;background:#c6c6c6;box-shadow:1px 0 0 #f2f2f2"></div>
<div class="abs" style="left:89.0px;top:58.5px;width:1px;height:19px;background:#c6c6c6;box-shadow:1px 0 0 #f2f2f2"></div>
<div class="lbl" style="left:34px;top:63.0px">职员编号</div>
<div class="lbl" style="left:97px;top:63.0px">内部职员姓名</div>
<div class="rr" style="top:78.5px"><div class="abs" style="left:0;top:0;width:26px;height:19px;background:#f3f3f3;line-height:21px;padding-left:5px">1</div><div class="rc" style="left:26.0px;width:63px;padding-left:7px">01</div><div class="rc" style="left:89.0px;width:149px;padding-left:7px">王一</div></div>
<div class="rr" style="top:98.5px"><div class="abs" style="left:0;top:0;width:26px;height:19px;background:#f3f3f3;line-height:21px;padding-left:5px">2</div><div class="rc" style="left:26.0px;width:63px;padding-left:7px">02</div><div class="rc" style="left:89.0px;width:149px;padding-left:7px">张三</div></div>
<div class="rr" style="top:118.6px"><div class="abs" style="left:0;top:0;width:26px;height:19px;background:#f3f3f3;line-height:21px;padding-left:5px">3</div><div class="rc" style="left:26.0px;width:63px;padding-left:7px;background:#d2edf9;box-shadow:0 -1px 0 #a5d8f0,0 1px 0 #a5d8f0">03</div><div class="rc" style="left:89.0px;width:149px;padding-left:7px;background:#d2edf9;box-shadow:0 -1px 0 #a5d8f0,0 1px 0 #a5d8f0;border-left-color:#a5d8f0">李四</div></div>
<div class="rr" style="top:138.7px"><div class="abs" style="left:0;top:0;width:26px;height:19px;background:#f3f3f3;line-height:21px;padding-left:5px"></div><div class="rc" style="left:26.0px;width:63px;padding-left:7px"></div><div class="rc" style="left:89.0px;width:149px;padding-left:7px"></div></div>
<div class="rr" style="top:158.7px"><div class="abs" style="left:0;top:0;width:26px;height:19px;background:#f3f3f3;line-height:21px;padding-left:5px"></div><div class="rc" style="left:26.0px;width:63px;padding-left:7px"></div><div class="rc" style="left:89.0px;width:149px;padding-left:7px"></div></div>
<div class="rr" style="top:178.8px"><div class="abs" style="left:0;top:0;width:26px;height:19px;background:#f3f3f3;line-height:21px;padding-left:5px"></div><div class="rc" style="left:26.0px;width:63px;padding-left:7px"></div><div class="rc" style="left:89.0px;width:149px;padding-left:7px"></div></div>
<div class="rr" style="top:198.8px"><div class="abs" style="left:0;top:0;width:26px;height:19px;background:#f3f3f3;line-height:21px;padding-left:5px"></div><div class="rc" style="left:26.0px;width:63px;padding-left:7px"></div><div class="rc" style="left:89.0px;width:149px;padding-left:7px"></div></div>
<div class="rr" style="top:218.8px"><div class="abs" style="left:0;top:0;width:26px;height:19px;background:#f3f3f3;line-height:21px;padding-left:5px"></div><div class="rc" style="left:26.0px;width:63px;padding-left:7px"></div><div class="rc" style="left:89.0px;width:149px;padding-left:7px"></div></div>
<div class="rr" style="top:238.9px"><div class="abs" style="left:0;top:0;width:26px;height:19px;background:#f3f3f3;line-height:21px;padding-left:5px"></div><div class="rc" style="left:26.0px;width:63px;padding-left:7px"></div><div class="rc" style="left:89.0px;width:149px;padding-left:7px"></div></div>
<div class="rr" style="top:259.0px"><div class="abs" style="left:0;top:0;width:26px;height:19px;background:#f3f3f3;line-height:21px;padding-left:5px"></div><div class="rc" style="left:26.0px;width:63px;padding-left:7px"></div><div class="rc" style="left:89.0px;width:149px;padding-left:7px"></div></div>
<div class="rr" style="top:279.0px"><div class="abs" style="left:0;top:0;width:26px;height:19px;background:#f3f3f3;line-height:21px;padding-left:5px"></div><div class="rc" style="left:26.0px;width:63px;padding-left:7px"></div><div class="rc" style="left:89.0px;width:149px;padding-left:7px"></div></div>
<div class="rr" style="top:299.1px"><div class="abs" style="left:0;top:0;width:26px;height:19px;background:#f3f3f3;line-height:21px;padding-left:5px"></div><div class="rc" style="left:26.0px;width:63px;padding-left:7px"></div><div class="rc" style="left:89.0px;width:149px;padding-left:7px"></div></div>
<div class="rr" style="top:319.1px"><div class="abs" style="left:0;top:0;width:26px;height:19px;background:#f3f3f3;line-height:21px;padding-left:5px"></div><div class="rc" style="left:26.0px;width:63px;padding-left:7px"></div><div class="rc" style="left:89.0px;width:149px;padding-left:7px"></div></div>
<div class="rr" style="top:339.2px"><div class="abs" style="left:0;top:0;width:26px;height:19px;background:#f3f3f3;line-height:21px;padding-left:5px"></div><div class="rc" style="left:26.0px;width:63px;padding-left:7px"></div><div class="rc" style="left:89.0px;width:149px;padding-left:7px"></div></div>
<div class="rr" style="top:359.2px"><div class="abs" style="left:0;top:0;width:26px;height:19px;background:#f3f3f3;line-height:21px;padding-left:5px"></div><div class="rc" style="left:26.0px;width:63px;padding-left:7px"></div><div class="rc" style="left:89.0px;width:149px;padding-left:7px"></div></div>
<div class="rr" style="top:379.2px"><div class="abs" style="left:0;top:0;width:26px;height:19px;background:#f3f3f3;line-height:21px;padding-left:5px"></div><div class="rc" style="left:26.0px;width:63px;padding-left:7px"></div><div class="rc" style="left:89.0px;width:149px;padding-left:7px"></div></div>
<div class="rr" style="top:399.3px"><div class="abs" style="left:0;top:0;width:26px;height:19px;background:#f3f3f3;line-height:21px;padding-left:5px"></div><div class="rc" style="left:26.0px;width:63px;padding-left:7px"></div><div class="rc" style="left:89.0px;width:149px;padding-left:7px"></div></div>
<div class="rr" style="top:419.4px"><div class="abs" style="left:0;top:0;width:26px;height:19px;background:#f3f3f3;line-height:21px;padding-left:5px"></div><div class="rc" style="left:26.0px;width:63px;padding-left:7px"></div><div class="rc" style="left:89.0px;width:149px;padding-left:7px"></div></div>
<div class="rr" style="top:439.4px"><div class="abs" style="left:0;top:0;width:26px;height:19px;background:#f3f3f3;line-height:21px;padding-left:5px"></div><div class="rc" style="left:26.0px;width:63px;padding-left:7px"></div><div class="rc" style="left:89.0px;width:149px;padding-left:7px"></div></div>
<div class="rr" style="top:459.4px"><div class="abs" style="left:0;top:0;width:26px;height:19px;background:#f3f3f3;line-height:21px;padding-left:5px"></div><div class="rc" style="left:26.0px;width:63px;padding-left:7px"></div><div class="rc" style="left:89.0px;width:149px;padding-left:7px"></div></div>
<div class="rr" style="top:479.5px"><div class="abs" style="left:0;top:0;width:26px;height:19px;background:#f3f3f3;line-height:21px;padding-left:5px"></div><div class="rc" style="left:26.0px;width:63px;padding-left:7px"></div><div class="rc" style="left:89.0px;width:149px;padding-left:7px"></div></div>
<div class="abs" style="left:238px;top:80px;width:18px;height:400px;background:linear-gradient(90deg,#e9e9e9,#f7f7f7 70%,#fdfdfd);border:1px solid #dcdcdc;border-right-color:#e6e6e6">
<div class="abs" style="left:1px;top:1px;width:13px;height:13px;border:1px solid #c9c9c9;border-radius:1px;background:linear-gradient(#fdfdfd,#e6e6e6)"></div>
<svg class="abs" style="left:4px;top:5px" width="7" height="4" viewBox="0 0 7 4"><path d="M0 4 L3.5 0 L7 4 Z" fill="#8a8a8a"/></svg>
<div class="abs" style="left:1px;top:383px;width:13px;height:13px;border:1px solid #c9c9c9;border-radius:1px;background:linear-gradient(#fdfdfd,#e6e6e6)"></div>
<svg class="abs" style="left:4px;top:388px" width="7" height="4" viewBox="0 0 7 4"><path d="M0 0 L3.5 4 L7 0 Z" fill="#8a8a8a"/></svg>
</div>
<div class="abs" style="left:201.5px;top:113.1px;width:31px;height:31px;border-radius:50%;background:linear-gradient(160deg,#b0e0fa 0,#8cccf5 38%,#5aaeea 52%,#4a9fe4 100%);border:1px solid #3a9df0;box-shadow:0 1px 3px rgba(40,80,120,.6),inset 0 0 0 1.5px #5fcdf9;z-index:5">
<svg class="abs" style="left:6px;top:6px" width="18" height="18" viewBox="0 0 18 18"><path d="M2 2 L11.5 2 L8.4 5.1 L16 12.7 L12.7 16 L5.1 8.4 L2 11.5 Z" fill="#fff" stroke="#3a8fdc" stroke-width=".5"/></svg></div></div></div>
</div>
<div id="status"><div class="abs" style="left:20px;top:5px;white-space:pre;line-height:14px;letter-spacing:.1px">当前时间：2009年06月11日  星期四  18时30分  下午</div><div class="abs" style="left:914px;top:5px;white-space:nowrap;line-height:14px;letter-spacing:.25px">当前操作员：超级用户</div><svg class="abs" style="left:1060px;top:7px" width="12" height="12" viewBox="0 0 12 12"><g fill="#0a3866"><rect x="9" y="0" width="2" height="2"/><rect x="6" y="3" width="2" height="2"/><rect x="9" y="3" width="2" height="2"/><rect x="3" y="6" width="2" height="2"/><rect x="6" y="6" width="2" height="2"/><rect x="9" y="6" width="2" height="2"/><rect x="0" y="9" width="2" height="2"/><rect x="3" y="9" width="2" height="2"/><rect x="6" y="9" width="2" height="2"/><rect x="9" y="9" width="2" height="2"/></g></svg></div></div>
</div>
<div class="abs" style="left:57px;top:711px;font-size:35px;line-height:36px;font-weight:bold;color:rgba(255,255,255,.55);letter-spacing:-1px;white-space:nowrap;z-index:9">Bai<span style="display:inline-block;width:48px"></span><span style="font-size:26px;font-weight:bold;letter-spacing:-1px;position:relative;top:-1px;left:-2px">百科</span></div><svg class="abs" style="left:108px;top:694px;z-index:9" width="50" height="52" viewBox="0 0 50 52"><defs><mask id="pm"><rect x="0" y="0" width="50" height="52" fill="#fff"/><text x="13.6" y="44.6" font-family="Liberation Sans, sans-serif" font-weight="bold" font-size="17" letter-spacing="-.3" fill="#000">du</text></mask></defs><g fill="rgba(255,255,255,.58)"><ellipse cx="18.4" cy="8.6" rx="5.2" ry="7.6"/><ellipse cx="32" cy="9.6" rx="5.2" ry="7.4"/><ellipse cx="7.6" cy="20" rx="5.4" ry="7"/><ellipse cx="41" cy="22.4" rx="5" ry="6.6"/>
<path mask="url(#pm)" d="M25 21 C32 21 35 28 41 34 C47 41 42 51 34 49 C29 48 21 48 16 49 C8 51 3 41 9 34 C15 28 18 21 25 21 Z"/></g></svg><div class="abs" style="left:1078px;top:751px;font-size:10px;line-height:10px;color:rgba(255,255,255,.62);white-space:nowrap;z-index:9">UIMAKER.COM</div><div class="abs" style="left:1062px;top:750px;width:11px;height:11px;border:3px solid rgba(255,255,255,.5);border-top:none;z-index:9"></div>
</body>
</html>
